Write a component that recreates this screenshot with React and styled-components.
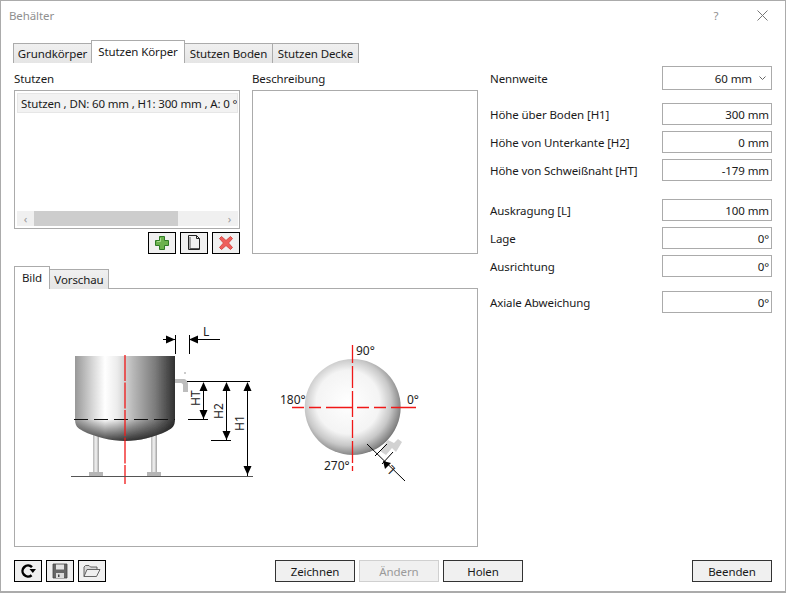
import React from "react";
import styled, { createGlobalStyle } from "styled-components";

const GlobalStyle = createGlobalStyle`
  html, body { margin: 0; padding: 0; background: #fff; }
  body { font-family: "Noto Sans", "Open Sans", sans-serif; font-size: 11.5px; color: #1a1a1a; }
`;

const FRAME = "#ababab";

const Win = styled.div`
  width: 786px;
  height: 593px;
  box-sizing: border-box;
  border: 1px solid ${FRAME};
  border-bottom-width: 2px;
  background: #fff;
  display: flex;
  flex-direction: column;
  letter-spacing: -0.1px;
`;

const TitleBar = styled.div`
  height: 28px;
  display: flex;
  align-items: center;
  padding-left: 8px;
  color: #8f8f8f;
  flex: none;
`;

const TitleText = styled.span`
  flex: 1;
`;

const WinButton = styled.span`
  width: 46px;
  height: 28px;
  display: flex;
  align-items: center;
  justify-content: center;
  color: #8f8f8f;
`;

const MainTabs = styled.div`
  display: flex;
  align-items: flex-end;
  height: 22px;
  margin-top: 12px;
  padding-left: 12px;
  flex: none;
`;

const Tab = styled.div`
  box-sizing: border-box;
  width: ${(p) => p.$w}px;
  height: ${(p) => (p.$active ? 23 : 20)}px;
  display: flex;
  align-items: center;
  justify-content: center;
  border: 1px solid ${FRAME};
  border-bottom: none;
  margin-left: ${(p) => (p.$first ? 0 : -1)}px;
  background: ${(p) => (p.$active ? "#fff" : "linear-gradient(#f0f0f0, #e5e5e5)")};
  padding-bottom: ${(p) => (p.$active ? 2 : 0)}px;
  position: relative;
  z-index: ${(p) => (p.$active ? 1 : 0)};
`;

const Content = styled.div`
  flex: 1;
  display: flex;
  gap: 12px;
  padding: 3px 13px 0;
  min-height: 0;
`;

const LeftCol = styled.div`
  width: 464px;
  flex: none;
  padding-top: 5px;
`;

const TopGrid = styled.div`
  display: grid;
  grid-template-columns: 226px 226px;
  column-gap: 12px;
`;

const Label = styled.div`
  height: 16px;
  line-height: 16px;
  margin-bottom: 3px;
`;

const ListBox = styled.div`
  box-sizing: border-box;
  height: 139px;
  border: 1px solid ${FRAME};
  padding: 2px 1px 2px 2px;
  display: flex;
  flex-direction: column;
  justify-content: space-between;
`;

const ListItem = styled.div`
  height: 20px;
  line-height: 20px;
  background: #f2f2f2;
  border: 1px solid #e6e6e6;
  box-sizing: border-box;
  padding-left: 3px;
  letter-spacing: -0.14px;
  white-space: nowrap;
  overflow: hidden;
`;

const ScrollBar = styled.div`
  height: 15px;
  background: #f0f0f0;
  display: flex;
  align-items: center;
  justify-content: space-between;
  color: #9a9a9a;
`;

const ScrollArrow = styled.span`
  width: 17px;
  display: flex;
  justify-content: center;
`;

const ScrollThumb = styled.div`
  height: 15px;
  width: 144px;
  background: #cdcdcd;
  margin-right: auto;
`;

const ActionRow = styled.div`
  display: flex;
  justify-content: flex-end;
  gap: 4px;
  margin-top: 3px;
`;

const IconButton = styled.button`
  box-sizing: border-box;
  width: 28px;
  height: 22px;
  padding: 0;
  border: 1px solid #000;
  background: #f0f0f0;
  display: flex;
  align-items: center;
  justify-content: center;
`;

const DescBox = styled.div`
  box-sizing: border-box;
  height: 164px;
  border: 1px solid ${FRAME};
`;

const ImageTabs = styled.div`
  display: flex;
  align-items: flex-end;
  height: 23px;
  margin-top: 12px;
`;

const ImagePanel = styled.div`
  box-sizing: border-box;
  height: 259px;
  margin-top: -1px;
  border: 1px solid ${FRAME};
`;

const Drawing = styled.svg`
  display: block;
`;

const RightCol = styled.div`
  flex: 1;
`;

const FieldRow = styled.div`
  display: flex;
  align-items: center;
  justify-content: space-between;
  height: ${(p) => p.$h || 22}px;
  margin-top: ${(p) => p.$top || 0}px;
`;

const ValueBox = styled.div`
  box-sizing: border-box;
  width: 110px;
  height: 100%;
  border: 1px solid ${FRAME};
  display: flex;
  align-items: center;
  justify-content: flex-end;
  padding-right: 2px;
`;

const SelectBox = styled(ValueBox)`
  padding-right: 5px;
  gap: 7px;
`;

const Footer = styled.div`
  display: flex;
  gap: 4px;
  align-items: center;
  padding: 0 13px;
  height: 22px;
  margin-bottom: 9px;
  flex: none;
`;

const PushButton = styled.button`
  box-sizing: border-box;
  width: 80px;
  height: 22px;
  padding: 0;
  border: 1px solid ${(p) => (p.disabled ? "#d0d0d0" : "#333")};
  background: #f0f0f0;
  color: ${(p) => (p.disabled ? "#9a9a9a" : "#1a1a1a")};
  font: inherit;
  letter-spacing: inherit;
  margin-left: ${(p) => p.$left || 0};
`;

const fields = [
  { label: "Höhe über Boden [H1]", value: "300 mm", top: 13 },
  { label: "Höhe von Unterkante [H2]", value: "0 mm", top: 6 },
  { label: "Höhe von Schweißnaht [HT]", value: "-179 mm", top: 6 },
  { label: "Auskragung [L]", value: "100 mm", top: 18 },
  { label: "Lage", value: "0°", top: 6 },
  { label: "Ausrichtung", value: "0°", top: 6 },
  { label: "Axiale Abweichung", value: "0°", top: 14 },
];

const PlusIcon = () => (
  <svg width="16" height="16" viewBox="0 0 16 16">
    <path d="M5.500 1.500h5v4h4v5h-4v4h-5v-4h-4v-5h4z" fill="#6cb24e" stroke="#2f7a26" />
    <path d="M6.500 3v3.500H3" fill="none" stroke="#a8dc8f" />
  </svg>
);

const CopyIcon = () => (
  <svg width="14" height="16" viewBox="0 0 14 16" fill="none" stroke="#222">
    <path d="M1.500 0.500h8l3 3v11h-11z" fill="#f0f0f0" />
    <path d="M3 14V2M3 13.500h9" stroke="#555" />
    <path d="M9.500 0.500v3h3" />
  </svg>
);

const DeleteIcon = () => (
  <svg width="16" height="16" viewBox="0 0 16 16">
    <path d="M3.500 1.500 8 5.500l4.500-4 2 2-4 4.500 4 4.500-2 2-4.500-4-4.500 4-2-2 4-4.500-4-4.500z" fill="#ee5f5b" stroke="#d84a45" />
  </svg>
);

const RefreshIcon = () => (
  <svg width="16" height="16" viewBox="0 0 16 16" fill="none">
    <path d="M11.600 12.200A5.500 5.500 0 1 1 12 4.200" stroke="#000" strokeWidth="2.500" />
    <path d="M9.500 6H16l-3.200 4z" fill="#000" />
  </svg>
);

const SaveIcon = () => (
  <svg width="16" height="16" viewBox="0 0 16 16">
    <path d="M1 1h14v14H1z" fill="#666" stroke="#444" strokeWidth="0.800" />
    <path d="M4 1.500h8v5H4z" fill="#e4e4e4" />
    <path d="M4 10h8v5H4z" fill="#dcdcdc" />
    <path d="M6 11.500h1.500v2.500H6z" fill="#444" />
  </svg>
);

const FolderIcon = () => (
  <svg width="18" height="14" viewBox="0 0 18 14" stroke="#555" strokeWidth="0.900">
    <path d="M1 12.500V3l1.500-1.500H6L7.500 3H14v2.500" fill="#d8d8d8" />
    <path d="M1 12.500 4 5.500h13l-3.500 7z" fill="#efefef" />
  </svg>
);

const Arrow = ({ x, y, dir }) => {
  const shapes = {
    up: `${x},${y} ${x - 4},${y + 9} ${x + 4},${y + 9}`,
    down: `${x},${y} ${x - 4},${y - 9} ${x + 4},${y - 9}`,
    left: `${x},${y} ${x + 9},${y - 4} ${x + 9},${y + 4}`,
    right: `${x},${y} ${x - 9},${y - 4} ${x - 9},${y + 4}`,
  };
  return <polygon points={shapes[dir]} fill="#000" />;
};

const DrawText = styled.text`
  font-family: "Noto Sans", sans-serif;
  font-size: 12px;
  fill: #222;
  letter-spacing: 0;
`;

const DimLabels = () => (
  <>
    <DrawText x="203" y="337">L</DrawText>
    <DrawText transform="translate(200 407) rotate(-90)">HT</DrawText>
    <DrawText transform="translate(223 420) rotate(-90)">H2</DrawText>
    <DrawText transform="translate(244 432) rotate(-90)">H1</DrawText>
  </>
);

const AngleLabels = () => (
  <>
    <DrawText x="356" y="356">90°</DrawText>
    <DrawText x="280" y="405">180°</DrawText>
    <DrawText x="407" y="405">0°</DrawText>
    <DrawText x="324" y="471">270°</DrawText>
    <DrawText transform="translate(396 470) rotate(-135)">L</DrawText>
  </>
);

// viewBox is offset so coordinates stay the page pixels of the screenshot
const TankDrawing = () => (
  <Drawing width="462" height="257" viewBox="15 290 462 257">
    <defs>
      <linearGradient id="body" x1="0" x2="1" y1="0" y2="0">
        <stop offset="0" stopColor="#989898" />
        <stop offset="0.18" stopColor="#d8d8d8" />
        <stop offset="0.3" stopColor="#ffffff" />
        <stop offset="0.42" stopColor="#ececec" />
        <stop offset="0.58" stopColor="#b8b8b8" />
        <stop offset="0.8" stopColor="#7c7c7c" />
        <stop offset="1" stopColor="#303030" />
      </linearGradient>
      <linearGradient id="bottom" x1="0" x2="0" y1="0" y2="1">
        <stop offset="0" stopColor="#000" stopOpacity="0" />
        <stop offset="1" stopColor="#000" stopOpacity="0.75" />
      </linearGradient>
      <linearGradient id="leg" x1="0" x2="1" y1="0" y2="0">
        <stop offset="0" stopColor="#b5b5b5" />
        <stop offset="0.5" stopColor="#f5f5f5" />
        <stop offset="1" stopColor="#a0a0a0" />
      </linearGradient>
      <radialGradient id="ball" cx="0.45" cy="0.45" r="0.6">
        <stop offset="0" stopColor="#ffffff" />
        <stop offset="0.55" stopColor="#f4f4f4" />
        <stop offset="0.75" stopColor="#c8c8c8" />
        <stop offset="0.92" stopColor="#858585" />
        <stop offset="1" stopColor="#4c4c4c" />
      </radialGradient>
      <filter id="soft">
        <feGaussianBlur stdDeviation="0.4" />
      </filter>
    </defs>

    <g filter="url(#soft)">
      <rect x="93" y="432" width="6" height="42" fill="url(#leg)" />
      <rect x="151" y="432" width="6" height="42" fill="url(#leg)" />
      <rect x="89" y="473" width="14" height="4" fill="#b5b5b5" />
      <rect x="147" y="473" width="14" height="4" fill="#b5b5b5" />
      <path d="M75 357h100v63H75z" fill="url(#body)" />
      <path d="M75 420h100c0 6-2 9-8 12-12 6-28 10-42 10s-30-4-42-10c-6-3-8-6-8-12z" fill="url(#body)" />
      <path d="M75 420h100c0 6-2 9-8 12-12 6-28 10-42 10s-30-4-42-10c-6-3-8-6-8-12z" fill="url(#bottom)" />
      <path d="M175 380h8c3 0 5 2 5 5v8h-5v-7c0-1-1-2-2-2h-6z" fill="#bdbdbd" />
      <circle cx="185" cy="374" r="1" fill="#bbb" />
    </g>
    <path d="M74 420.500h101" stroke="#111" strokeWidth="1" strokeDasharray="14 6" fill="none" />
    <path d="M125 356v129" stroke="#f01818" strokeWidth="1.300" strokeDasharray="26 1.500 26 1.500" fill="none" />
    <path d="M71 477.500h182" stroke="#555" strokeWidth="1.200" />

    <g stroke="#000" strokeWidth="1" fill="none">
      <path d="M175.500 336v19M189.500 336v19M163 340.500h12M189 340.500h31" />
      <path d="M187 382.500h63M188 420.500h20M211 441.500h20" />
      <path d="M203.500 384v36M226.500 384v57M247.500 384v93" />
    </g>
    <Arrow x={175} y={340.500} dir="right" />
    <Arrow x={189} y={340.500} dir="left" />
    <Arrow x={203.500} y={383} dir="up" />
    <Arrow x={203.500} y={420} dir="down" />
    <Arrow x={226.500} y={383} dir="up" />
    <Arrow x={226.500} y={441} dir="down" />
    <Arrow x={247.500} y={383} dir="up" />
    <Arrow x={247.500} y={476} dir="down" />
    <DimLabels />

    <path d="M380 452l8-11 6 3 4-4 4 3-6 10-4-4-6 7z" fill="#d2d2d2" filter="url(#soft)" />
    <circle cx="352.700" cy="408" r="48" fill="url(#ball)" filter="url(#soft)" />
    <path d="M352.500 346v126" stroke="#f01818" strokeWidth="1.300" strokeDasharray="18 3 22 3 26 3" fill="none" />
    <path d="M292 408.500h124" stroke="#f01818" strokeWidth="1.300" strokeDasharray="12 5 12 5 26 5" fill="none" />
    <path d="M367 445l38 37M375 457l12-12M382 465l11-12" stroke="#000" strokeWidth="1" fill="none" />
    <polygon points="383,462 391,464 385,470" fill="#000" />
    <AngleLabels />
  </Drawing>
);

const App = () => (
  <>
    <GlobalStyle />
    <Win>
      <TitleBar>
        <TitleText>Behälter</TitleText>
        <WinButton>?</WinButton>
        <WinButton>
          <svg width="11" height="11" viewBox="0 0 11 11" stroke="#777" fill="none">
            <path d="M0.500 0.500l10 10M10.500 0.500l-10 10" />
          </svg>
        </WinButton>
      </TitleBar>

      <MainTabs>
        <Tab $w={79} $first>Grundkörper</Tab>
        <Tab $w={94} $active>Stutzen Körper</Tab>
        <Tab $w={89}>Stutzen Boden</Tab>
        <Tab $w={87}>Stutzen Decke</Tab>
      </MainTabs>

      <Content>
        <LeftCol>
          <TopGrid>
            <div>
              <Label>Stutzen</Label>
              <ListBox>
                <ListItem>Stutzen , DN: 60 mm , H1: 300 mm , A: 0 °</ListItem>
                <ScrollBar>
                  <ScrollArrow>‹</ScrollArrow>
                  <ScrollThumb />
                  <ScrollArrow>›</ScrollArrow>
                </ScrollBar>
              </ListBox>
              <ActionRow>
                <IconButton><PlusIcon /></IconButton>
                <IconButton><CopyIcon /></IconButton>
                <IconButton><DeleteIcon /></IconButton>
              </ActionRow>
            </div>
            <div>
              <Label>Beschreibung</Label>
              <DescBox />
            </div>
          </TopGrid>

          <ImageTabs>
            <Tab $w={36} $active $first>Bild</Tab>
            <Tab $w={60}>Vorschau</Tab>
          </ImageTabs>
          <ImagePanel>
            <TankDrawing />
          </ImagePanel>
        </LeftCol>

        <RightCol>
          <FieldRow $h={24}>
            <span>Nennweite</span>
            <SelectBox>
              60 mm
              <svg width="7" height="5" viewBox="0 0 7 5" fill="none" stroke="#666">
                <path d="M0.500 0.500 3.500 3.500 6.500 0.500" />
              </svg>
            </SelectBox>
          </FieldRow>
          {fields.map((f) => (
            <FieldRow key={f.label} $top={f.top}>
              <span>{f.label}</span>
              <ValueBox>{f.value}</ValueBox>
            </FieldRow>
          ))}
        </RightCol>
      </Content>

      <Footer>
        <IconButton><RefreshIcon /></IconButton>
        <IconButton><SaveIcon /></IconButton>
        <IconButton><FolderIcon /></IconButton>
        <PushButton $left="165px">Zeichnen</PushButton>
        <PushButton disabled>Ändern</PushButton>
        <PushButton>Holen</PushButton>
        <PushButton $left="auto">Beenden</PushButton>
      </Footer>
    </Win>
  </>
);

export default App;
